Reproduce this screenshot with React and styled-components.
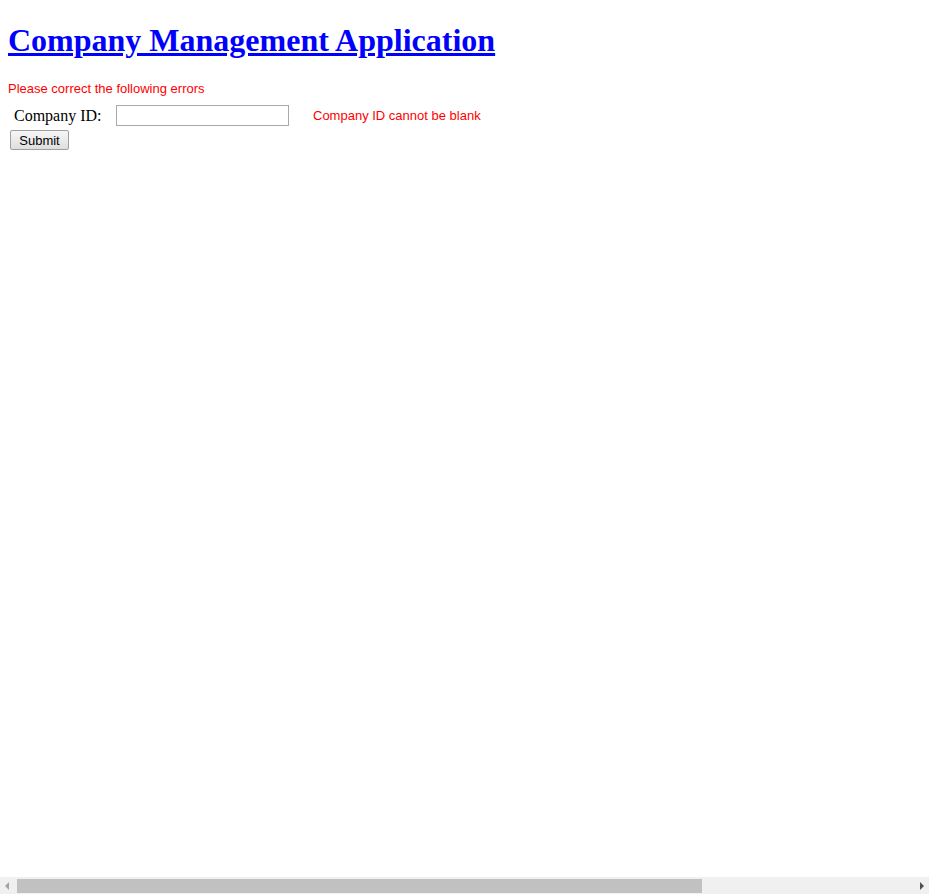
import React from "react";
import styled, { createGlobalStyle } from "styled-components";

const Global = createGlobalStyle`
  body {
    margin: 8px;
    background: #ffffff;
    font-family: "Liberation Serif", "Times New Roman", serif;
  }
`;

const Title = styled.h1`
  font-family: "Liberation Serif", "Times New Roman", serif;
  font-size: 32px;
  font-weight: 700;
  margin: 14px 0 22px;
  line-height: 37px;
`;

const TitleLink = styled.a`
  color: #0000ff;
  text-decoration: underline;
`;

const ErrorTitle = styled.div`
  font-family: "Liberation Sans", Arial, sans-serif;
  font-size: 13px;
  line-height: 15px;
  color: #ff0000;
`;

const FieldRow = styled.div`
  display: flex;
  align-items: center;
  height: 25px;
  margin-top: 7px;
  white-space: nowrap;
`;

const Label = styled.span`
  flex: 0 0 auto;
  font-family: "Liberation Serif", "Times New Roman", serif;
  font-size: 16px;
  padding-left: 6px;
  width: 87px;
  color: #000;
`;

const TextInput = styled.input`
  flex: 0 0 auto;
  box-sizing: border-box;
  width: 173px;
  height: 21px;
  margin: 0 0 0 15px;
  border: 1px solid #a9a9a9;
  padding: 1px 2px;
  font-size: 13px;
  outline: none;
`;

const FieldError = styled.span`
  font-family: "Liberation Sans", Arial, sans-serif;
  font-size: 13px;
  color: #ff0000;
  margin-left: 24px;
`;

const SubmitButton = styled.button`
  box-sizing: border-box;
  display: block;
  width: 59px;
  height: 20px;
  margin: 2px 0 0 2px;
  padding: 0;
  font-family: "Liberation Sans", Arial, sans-serif;
  font-size: 13px;
  color: #000;
  border: 1px solid #a0a0a0;
  border-radius: 2px;
  background: linear-gradient(#f6f6f6, #dedede);
`;

/* imitation of the window's horizontal scrollbar, pinned over the page bottom */
const ScrollBar = styled.div`
  position: fixed;
  left: 0;
  right: 0;
  bottom: 0;
  height: 17px;
  display: flex;
  align-items: center;
  background: #f0f0f0;
`;

const ArrowCell = styled.div`
  flex: 0 0 17px;
  height: 17px;
  display: flex;
  align-items: center;
  justify-content: center;
`;

const Arrow = styled.div`
  width: 0;
  height: 0;
  border-top: 4px solid transparent;
  border-bottom: 4px solid transparent;
  ${(p) =>
    p.$dir === "left"
      ? `border-right: 4px solid #a3a3a3; margin-right: 4px;`
      : `border-left: 4px solid #505050; margin-left: 2px;`}
`;

const Track = styled.div`
  flex: 1;
  height: 14px;
  margin-top: 1px;
`;

const Thumb = styled.div`
  width: 685px;
  height: 100%;
  background: #c1c1c1;
`;

export default function App() {
  return (
    <>
      <Global />
      <Title>
        <TitleLink href="#">Company Management Application</TitleLink>
      </Title>
      <ErrorTitle>Please correct the following errors</ErrorTitle>
      <form onSubmit={(e) => e.preventDefault()}>
        <FieldRow>
          <Label>Company ID:</Label>
          <TextInput type="text" />
          <FieldError>Company ID cannot be blank</FieldError>
        </FieldRow>
        <SubmitButton type="submit">Submit</SubmitButton>
      </form>
      <ScrollBar>
        <ArrowCell>
          <Arrow $dir="left" />
        </ArrowCell>
        <Track>
          <Thumb />
        </Track>
        <ArrowCell>
          <Arrow $dir="right" />
        </ArrowCell>
      </ScrollBar>
    </>
  );
}
